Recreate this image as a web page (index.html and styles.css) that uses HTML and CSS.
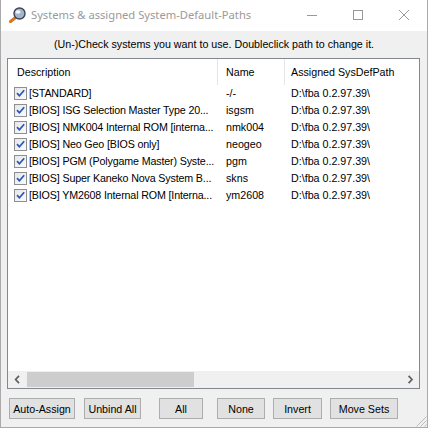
FILE: index.html
```html
<!DOCTYPE html>
<html>
<head>
<meta charset="utf-8">
<link rel="stylesheet" href="styles.css">
</head>
<body>
<svg class="defs" width="0" height="0">
  <defs>
    <linearGradient id="chkbg" x1="0" y1="0" x2="1" y2="1">
      <stop offset="0" stop-color="#e4e6ea"/>
      <stop offset="1" stop-color="#fbfbfb"/>
    </linearGradient>
    <symbol id="chk" viewBox="0 0 13 13">
      <rect x=".5" y=".5" width="12" height="12" fill="url(#chkbg)" stroke="#8e8f8f"/>
      <path d="M3 6.2 L5.4 8.8 L10.2 3.2" fill="none" stroke="#2a55b5" stroke-width="1.7"/>
    </symbol>
  </defs>
</svg>
<div class="window">
  <div class="titlebar">
    <svg class="app-icon" width="18" height="16" viewBox="0 0 18 16">
      <line x1="7" y1="11" x2="2.5" y2="14.5" stroke="#d8751f" stroke-width="3" stroke-linecap="round"/>
      <circle cx="11.5" cy="6.5" r="5.5" fill="#9fb6cc" stroke="#3c4450" stroke-width="1.4"/>
      <ellipse cx="10" cy="5" rx="2.6" ry="1.8" fill="#ffffff" opacity="0.85"/>
    </svg>
    <span class="title">Systems &amp; assigned System-Default-Paths</span>
    <div class="caption">
      <div class="cap-btn">
        <svg width="10" height="10" viewBox="0 0 10 10"><line x1="0" y1="5.5" x2="10" y2="5.5" stroke="#999" stroke-width="1"/></svg>
      </div>
      <div class="cap-btn">
        <svg width="10" height="10" viewBox="0 0 10 10"><rect x=".5" y=".5" width="9" height="9" fill="none" stroke="#999" stroke-width="1"/></svg>
      </div>
      <div class="cap-btn">
        <svg width="10" height="10" viewBox="0 0 10 10"><path d="M0 0 L10 10 M10 0 L0 10" stroke="#999" stroke-width="1"/></svg>
      </div>
    </div>
  </div>

  <div class="instruction">(Un-)Check systems you want to use. Doubleclick path to change it.</div>

  <div class="list">
    <div class="header">
      <div class="hcol hcol-desc">Description</div>
      <div class="hcol hcol-name">Name</div>
      <div class="hcol hcol-path">Assigned SysDefPath</div>
    </div>
    <div class="rows">
      <div class="row">
        <div class="cell cell-desc"><svg class="check" width="13" height="13"><use href="#chk"/></svg><span class="txt">[STANDARD]</span></div>
        <div class="cell cell-name">-/-</div>
        <div class="cell cell-path">D:\fba 0.2.97.39\</div>
      </div>
      <div class="row">
        <div class="cell cell-desc"><svg class="check" width="13" height="13"><use href="#chk"/></svg><span class="txt">[BIOS] ISG Selection Master Type 20...</span></div>
        <div class="cell cell-name">isgsm</div>
        <div class="cell cell-path">D:\fba 0.2.97.39\</div>
      </div>
      <div class="row">
        <div class="cell cell-desc"><svg class="check" width="13" height="13"><use href="#chk"/></svg><span class="txt">[BIOS] NMK004 Internal ROM [interna...</span></div>
        <div class="cell cell-name">nmk004</div>
        <div class="cell cell-path">D:\fba 0.2.97.39\</div>
      </div>
      <div class="row">
        <div class="cell cell-desc"><svg class="check" width="13" height="13"><use href="#chk"/></svg><span class="txt">[BIOS] Neo Geo [BIOS only]</span></div>
        <div class="cell cell-name">neogeo</div>
        <div class="cell cell-path">D:\fba 0.2.97.39\</div>
      </div>
      <div class="row">
        <div class="cell cell-desc"><svg class="check" width="13" height="13"><use href="#chk"/></svg><span class="txt">[BIOS] PGM (Polygame Master) Syste...</span></div>
        <div class="cell cell-name">pgm</div>
        <div class="cell cell-path">D:\fba 0.2.97.39\</div>
      </div>
      <div class="row">
        <div class="cell cell-desc"><svg class="check" width="13" height="13"><use href="#chk"/></svg><span class="txt">[BIOS] Super Kaneko Nova System B...</span></div>
        <div class="cell cell-name">skns</div>
        <div class="cell cell-path">D:\fba 0.2.97.39\</div>
      </div>
      <div class="row">
        <div class="cell cell-desc"><svg class="check" width="13" height="13"><use href="#chk"/></svg><span class="txt">[BIOS] YM2608 Internal ROM [Interna...</span></div>
        <div class="cell cell-name">ym2608</div>
        <div class="cell cell-path">D:\fba 0.2.97.39\</div>
      </div>
    </div>
    <div class="hscroll">
      <div class="sarrow">
        <svg width="17" height="17" viewBox="0 0 17 17"><path d="M11 4.8 L7.6 8.5 L11 12.2" fill="none" stroke="#606060" stroke-width="1.7"/></svg>
      </div>
      <div class="track"><div class="thumb"></div></div>
      <div class="sarrow">
        <svg width="17" height="17" viewBox="0 0 17 17"><path d="M6.6 4.8 L10 8.5 L6.6 12.2" fill="none" stroke="#606060" stroke-width="1.7"/></svg>
      </div>
    </div>
  </div>

  <div class="buttons">
    <button class="btn btn-auto">Auto-Assign</button>
    <button class="btn btn-unbind">Unbind All</button>
    <button class="btn btn-all">All</button>
    <button class="btn btn-none">None</button>
    <button class="btn btn-invert">Invert</button>
    <button class="btn btn-move">Move Sets</button>
  </div>

  <svg class="grip" width="11" height="11" viewBox="0 0 11 11">
    <path d="M10.5 0.5 L0.5 10.5 M10.5 4.5 L4.5 10.5 M10.5 8.5 L8.5 10.5" stroke="#bcbcbc" stroke-width="1"/>
  </svg>
</div>
</body>
</html>
```

FILE: styles.css
```css
* { box-sizing: border-box; }

html, body {
  margin: 0;
  padding: 0;
  background: #f0f0f0;
}

.defs {
  position: absolute;
  width: 0;
  height: 0;
}

.window {
  position: relative;
  width: 428px;
  height: 428px;
  background: #f0f0f0;
  border-left: 1px solid #aaaaaa;
  border-right: 1px solid #aaaaaa;
  border-bottom: 1px solid #aaaaaa;
  display: flex;
  flex-direction: column;
  font-family: "Liberation Sans", Arial, sans-serif;
  font-size: 10.7px;
  color: #000;
  overflow: hidden;
}

.titlebar {
  height: 31px;
  flex: none;
  background: #ffffff;
  display: flex;
  align-items: flex-start;
}

.app-icon {
  margin-left: 7px;
  margin-top: 7px;
  flex: none;
}

.title {
  margin-left: 5px;
  font-family: "Noto Sans", "Open Sans", sans-serif;
  font-size: 11.2px;
  line-height: 30px;
  color: #9a9a9a;
  white-space: nowrap;
}

.caption {
  margin-left: auto;
  display: flex;
}

.cap-btn {
  width: 46px;
  height: 30px;
  display: flex;
  align-items: center;
  justify-content: center;
}

.cap-btn svg { display: block; }

.instruction {
  height: 27px;
  flex: none;
  line-height: 27px;
  text-align: center;
  white-space: nowrap;
}

.list {
  margin-left: 6px;
  width: 413px;
  height: 331px;
  flex: none;
  border: 1px solid #828790;
  background: #ffffff;
  display: flex;
  flex-direction: column;
  overflow: hidden;
}

.header {
  height: 26px;
  flex: none;
  display: flex;
  background: #ffffff;
}

.hcol {
  height: 100%;
  line-height: 26px;
  white-space: nowrap;
  flex: none;
}

.hcol-desc {
  width: 210px;
  padding-left: 9px;
  border-right: 1px solid #e5e5e5;
}

.hcol-name {
  width: 67px;
  padding-left: 8px;
  border-right: 1px solid #e5e5e5;
}

.hcol-path {
  padding-left: 6px;
}

.rows {
  flex: 1;
  overflow: hidden;
}

.row {
  height: 17px;
  display: flex;
  align-items: center;
  white-space: nowrap;
}

.cell {
  flex: none;
  overflow: hidden;
  line-height: 17px;
}

.cell-desc {
  width: 210px;
  padding-left: 6px;
  display: flex;
  align-items: center;
}

.check {
  flex: none;
  display: block;
  margin-right: 2px;
}

.txt {
  white-space: nowrap;
  letter-spacing: -0.15px;
}

.cell-name {
  width: 67px;
  padding-left: 8px;
}

.cell-path {
  padding-left: 6px;
}

.hscroll {
  height: 17px;
  flex: none;
  display: flex;
  background: #f0f0f0;
}

.sarrow {
  width: 17px;
  height: 17px;
  flex: none;
}

.sarrow svg { display: block; }

.track {
  flex: 1;
  padding: 1px 0 1px 2px;
}

.thumb {
  width: 167px;
  height: 15px;
  background: #cdcdcd;
}

.buttons {
  margin-top: 9px;
  height: 21px;
  flex: none;
  display: flex;
}

.btn {
  height: 21px;
  padding: 0;
  margin: 0;
  border: 1px solid #adadad;
  background: #e1e1e1;
  font-family: "Liberation Sans", Arial, sans-serif;
  font-size: 10.7px;
  color: #000;
  white-space: nowrap;
  flex: none;
}

.btn-auto   { margin-left: 8px;  width: 66px; }
.btn-unbind { margin-left: 9px;  width: 57px; }
.btn-all    { margin-left: 18px; width: 44px; }
.btn-none   { margin-left: 14px; width: 48px; }
.btn-invert { margin-left: 8px;  width: 49px; }
.btn-move   { margin-left: 8px;  width: 68px; }

.grip {
  position: absolute;
  right: 0;
  bottom: 0;
}
```
